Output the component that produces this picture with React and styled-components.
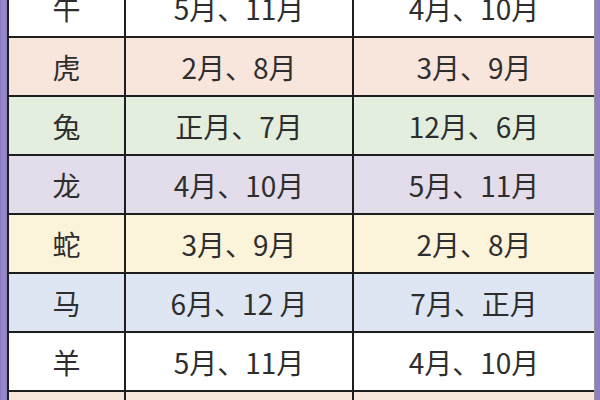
import React from "react";
import styled, { createGlobalStyle } from "styled-components";

const Global = createGlobalStyle`
  html, body { margin: 0; padding: 0; }
  body { width: 600px; height: 400px; overflow: hidden; background: #8f80c6; }
  #root { width: 600px; height: 400px; }
`;

const Frame = styled.div`
  width: 600px;
  height: 400px;
  overflow: hidden;
  box-sizing: border-box;
  padding: 0 5px 0 7px;
  background: linear-gradient(90deg, #8a7bc2 0, #9a8ccd 4px, #8e7fc6 7px);
`;

const Table = styled.div`
  margin-top: -21px;
  display: grid;
  grid-template-columns: 115px 226px 1fr;
  grid-auto-rows: 57px;
  gap: 2px;
  background: #1e1e1e;
  border-left: 2px solid #1e1e1e;
  border-right: 1px solid #9a9a9a;
`;

const Cell = styled.div`
  display: flex;
  align-items: center;
  justify-content: center;
  background: ${(p) => p.$bg};
  color: #2e2e2e;
  font-family: "Noto Sans CJK SC", "Noto Sans", sans-serif;
  font-size: 28px;
  line-height: 1;
  white-space: pre;
`;

const colors = {
  white: "#ffffff",
  peach: "#f8e5dc",
  green: "#e3eedf",
  lavender: "#e3dcea",
  yellow: "#fcf3db",
  blue: "#dde6f2",
};

const rows = [
  ["午", "5月、11月", "4月、10月", "white"],
  ["虎", "2月、8月", "3月、9月", "peach"],
  ["兔", "正月、7月", "12月、6月", "green"],
  ["龙", "4月、10月", "5月、11月", "lavender"],
  ["蛇", "3月、9月", "2月、8月", "yellow"],
  ["马", "6月、12 月", "7月、正月", "blue"],
  ["羊", "5月、11月", "4月、10月", "white"],
  ["", "", "", "peach"],
];

export default function App() {
  return (
    <>
      <Global />
      <Frame>
        <Table>
          {rows.map(([a, b, c, k], i) => (
            <React.Fragment key={i}>
              <Cell $bg={colors[k]}>{a}</Cell>
              <Cell $bg={colors[k]}>{b}</Cell>
              <Cell $bg={colors[k]}>{c}</Cell>
            </React.Fragment>
          ))}
        </Table>
      </Frame>
    </>
  );
}
